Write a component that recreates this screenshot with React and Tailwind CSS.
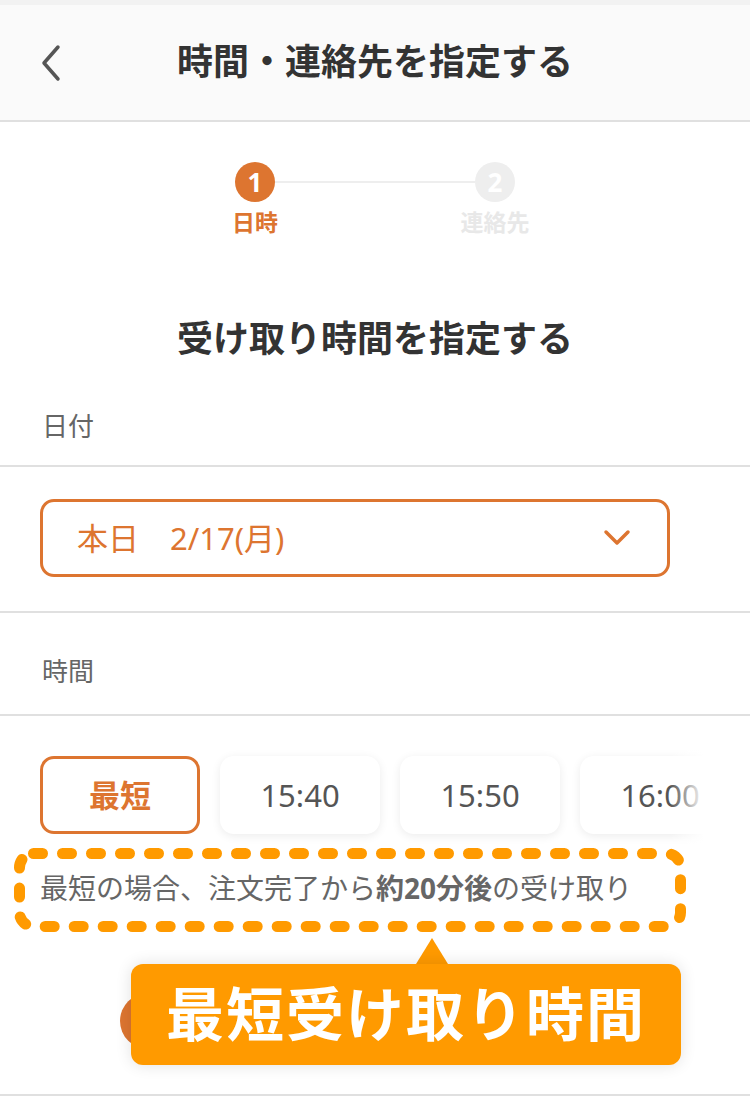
import { useState } from "react";

const FONT = { fontFamily: '"Noto Sans", "Noto Sans CJK JP", sans-serif' };

const times = ["最短", "15:40", "15:50", "16:00"];

function Stepper() {
  return (
    <div className="flex justify-center pt-[40px]">
      <div className="flex flex-col items-center">
        <div className="flex items-center">
          <div className="w-10 h-10 rounded-full bg-[#dd7530] flex items-center justify-center text-white text-[26px] font-bold leading-none">
            1
          </div>
          <div className="w-[200px] h-[2px] bg-[#eeeeee]" />
          <div className="w-10 h-10 rounded-full bg-[#eeeeee] flex items-center justify-center text-white text-[26px] font-bold leading-none">
            2
          </div>
        </div>
        <div className="flex w-full justify-between mt-[5px] text-[23px] leading-[30px] font-bold">
          <span className="w-10 flex justify-center whitespace-nowrap text-[#dd7530]">日時</span>
          <span className="w-10 flex justify-center whitespace-nowrap text-[#e8e8e8]">連絡先</span>
        </div>
      </div>
    </div>
  );
}

function Divider() {
  return <div className="h-[2px] bg-[#e0e0e0]" />;
}

export default function App() {
  const [selected, setSelected] = useState(0);

  return (
    <div className="w-[750px] h-[1098px] bg-white overflow-hidden relative" style={FONT}>
      {/* Header */}
      <div className="h-[122px] bg-[#fafafa] border-b-2 border-[#e0e0e0] flex flex-col">
        <div className="h-[5px] bg-[#f2f2f2]" />
        <div className="flex-1 relative flex items-center justify-center">
          <button className="absolute left-[36px] top-[36px] w-[30px] h-[44px] flex items-center justify-center">
            <svg width="24" height="38" viewBox="0 0 24 38" fill="none">
              <polyline points="19,3 5,19 19,35" stroke="#555" strokeWidth="3.5" strokeLinecap="round" strokeLinejoin="round" />
            </svg>
          </button>
          <h1 className="text-[36px] font-bold text-[#333] leading-none -mt-[1px]">時間・連絡先を指定する</h1>
        </div>
      </div>

      <Stepper />

      <h2 className="mt-[79px] text-center text-[36px] leading-[46px] font-bold text-[#333]">
        受け取り時間を指定する
      </h2>

      {/* Date */}
      <div className="mt-[47px] mb-[22px] px-[42px] text-[26px] leading-[34px] text-[#666]">日付</div>
      <Divider />
      <div className="pt-[32px] pb-[34px] px-[40px]">
        <button className="w-[630px] h-[78px] border-[3px] border-[#dd7530] rounded-[14px] flex items-center justify-between pl-[34px] pr-[36px]">
          <span className="text-[31px] text-[#dd7530] whitespace-pre leading-none">本日　2/17(月)</span>
          <svg width="28" height="18" viewBox="0 0 28 18" fill="none">
            <polyline points="3,3 14,14 25,3" stroke="#dd7530" strokeWidth="3.5" strokeLinecap="round" strokeLinejoin="round" />
          </svg>
        </button>
      </div>
      <Divider />

      {/* Time */}
      <div className="mt-[41px] mb-[26px] px-[42px] text-[26px] leading-[34px] text-[#666]">時間</div>
      <Divider />

      <div className="relative w-[704px] overflow-hidden pt-[40px] -mb-[10px] pb-[10px]">
        <div className="flex gap-[20px] pl-[40px]">
          {times.map((t, i) => (
            <button
              key={t}
              onClick={() => setSelected(i)}
              className={
                "shrink-0 w-[160px] h-[78px] rounded-[14px] flex items-center justify-center bg-white leading-none " +
                (i === selected
                  ? "border-[3px] border-[#dd7530] text-[#dd7530] font-bold text-[31px]"
                  : "shadow-[0_2px_10px_rgba(0,0,0,0.08)] text-[#555] text-[31px]")
              }
            >
              {t}
            </button>
          ))}
        </div>
        <div className="absolute right-0 top-0 bottom-0 w-[34px] bg-gradient-to-r from-white/0 to-white" />
      </div>

      {/* Note with annotation */}
      <div className="relative mt-[39px] px-[40px] text-[28px] leading-[30px] text-[#666] whitespace-nowrap">
        最短の場合、注文完了から<span className="font-bold">約20分後</span>の受け取り
        <svg className="absolute left-0 -top-[25px]" width="700" height="90" viewBox="0 0 700 90" fill="none">
          <rect x="19.5" y="5.5" width="661" height="73" rx="14" stroke="#ff9a00" strokeWidth="11" strokeDasharray="9 20" strokeLinecap="round" />
        </svg>
      </div>

      {/* Primary button (covered by callout) */}
      <div className="mt-[90px] px-[120px]">
        <div className="h-[56px] rounded-full bg-[#dd7530]" />
      </div>

      <div className="absolute left-0 right-0 top-[1094px]">
        <Divider />
      </div>

      {/* Callout */}
      <div className="absolute left-[131px] top-[938px] w-[550px] flex flex-col">
        <svg className="ml-[285px]" width="32" height="26" viewBox="0 0 32 26">
          <polygon points="16,0 32,26 0,26" fill="#ff9a00" />
        </svg>
        <div className="h-[101px] bg-[#ff9a00] rounded-[12px] shadow-[0_0_16px_rgba(0,0,0,0.12)] flex items-center justify-center">
          <span className="text-white font-bold text-[58px] leading-none tracking-[2px] -mt-[2px]">最短受け取り時間</span>
        </div>
      </div>
    </div>
  );
}
